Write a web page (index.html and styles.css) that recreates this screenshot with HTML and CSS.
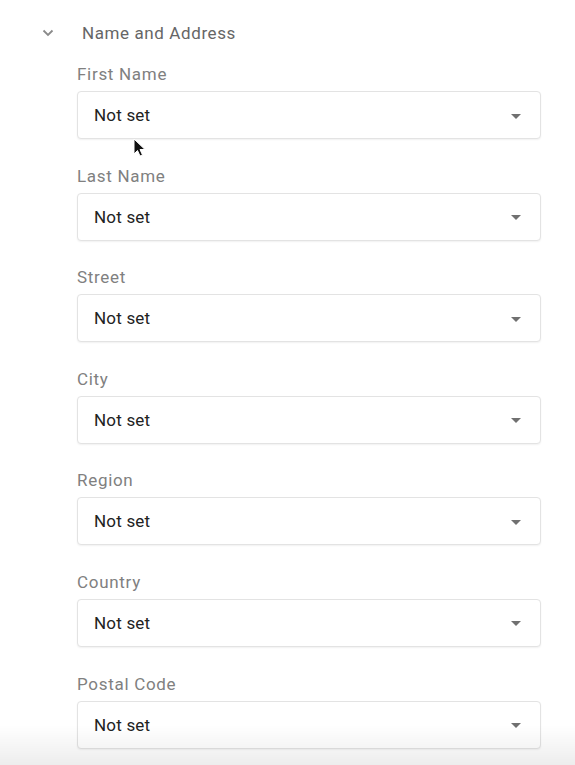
FILE: index.html
```html
<!DOCTYPE html>
<html>
<head>
<meta charset="utf-8">
<link rel="stylesheet" href="styles.css">
</head>
<body>
<div class="panel">
  <div class="header">
    <svg class="chev" width="12" height="8" viewBox="0 0 12 8"><path d="M1.5 1.5 L6 6 L10.5 1.5" fill="none" stroke="#8a8a8a" stroke-width="1.8"/></svg>
    <span class="title">Name and Address</span>
  </div>
  <div class="fields">
    <div class="field"><div class="label">First Name</div><div class="select"><span>Not set</span><i class="caret"></i></div></div>
    <div class="field"><div class="label">Last Name</div><div class="select"><span>Not set</span><i class="caret"></i></div></div>
    <div class="field"><div class="label">Street</div><div class="select"><span>Not set</span><i class="caret"></i></div></div>
    <div class="field"><div class="label">City</div><div class="select"><span>Not set</span><i class="caret"></i></div></div>
    <div class="field"><div class="label">Region</div><div class="select"><span>Not set</span><i class="caret"></i></div></div>
    <div class="field"><div class="label">Country</div><div class="select"><span>Not set</span><i class="caret"></i></div></div>
    <div class="field"><div class="label">Postal Code</div><div class="select"><span>Not set</span><i class="caret"></i></div></div>
  </div>
</div>
<svg class="cursor" width="14" height="20" viewBox="0 0 14 20"><path d="M1 1 L1 16 L4.5 12.5 L7 18 L9.5 17 L7 11.5 L12 11.5 Z" fill="#111" stroke="#fff" stroke-width="1"/></svg>
<div class="fade"></div>
</body>
</html>
```
FILE: styles.css
```css
html, body {
  margin: 0;
  padding: 0;
  background: #fff;
  font-family: Roboto, "Liberation Sans", sans-serif;
}
.panel {
  padding-top: 23px;
}
.header {
  display: flex;
  align-items: center;
  height: 20px;
  padding-left: 42px;
}
.chev {
  display: block;
  margin-right: 28px;
}
.title {
  font-size: 17px;
  letter-spacing: 0.6px;
  color: #666;
  line-height: 20px;
}
.fields {
  padding-left: 77px;
  padding-top: 21px;
  width: 464px;
}
.field {
  margin-bottom: 26.6px;
}
.label {
  font-size: 17px;
  letter-spacing: 0.7px;
  line-height: 20px;
  color: #808080;
  margin-bottom: 7px;
}
.select {
  box-sizing: border-box;
  height: 48px;
  border: 1px solid #e3e3e3;
  border-radius: 4px;
  box-shadow: 0 1px 2px rgba(0,0,0,0.06);
  display: flex;
  align-items: center;
  justify-content: space-between;
  padding: 0 19px 0 16px;
  background: #fff;
}
.select span {
  font-size: 17px;
  letter-spacing: 0.2px;
  color: #222;
}
.caret {
  width: 0;
  height: 0;
  border-left: 5px solid transparent;
  border-right: 5px solid transparent;
  border-top: 5px solid #707070;
  margin-top: 2px;
}
.cursor {
  position: absolute;
  left: 133px;
  top: 138px;
}
.fade {
  position: fixed;
  left: 0;
  right: 0;
  bottom: 0;
  height: 40px;
  background: linear-gradient(to bottom, rgba(0,0,0,0), rgba(0,0,0,0.07));
  pointer-events: none;
}
```
